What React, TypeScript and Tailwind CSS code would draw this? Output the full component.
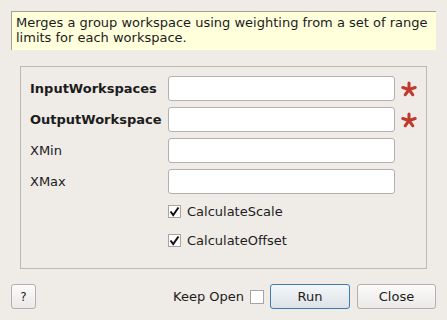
import React from "react";

const FONT = { fontFamily: '"DejaVu Sans", "Liberation Sans", sans-serif' };

function Asterisk() {
  const arms = [-90, -18, 54, 126, 198];
  return (
    <svg width="16" height="16" viewBox="0 0 16 16" className="block">
      {arms.map((a) => {
        const r = (a * Math.PI) / 180;
        return (
          <line
            key={a}
            x1="8"
            y1="8.5"
            x2={8 + Math.cos(r) * 6.5}
            y2={8.5 + Math.sin(r) * 6.5}
            stroke="#c0392b"
            strokeWidth="3"
            strokeLinecap="round"
          />
        );
      })}
    </svg>
  );
}

function Check({ checked }: { checked: boolean }) {
  return (
    <div className="w-[13px] h-[13px] border border-[#a8a4a0] bg-white flex items-center justify-center">
      {checked && (
        <svg width="11" height="11" viewBox="0 0 11 11">
          <path d="M1.5 5.5 L4.2 9 L9.5 1.5" fill="none" stroke="#111" strokeWidth="2" />
        </svg>
      )}
    </div>
  );
}

const fields = [
  { name: "InputWorkspaces", bold: true, required: true },
  { name: "OutputWorkspace", bold: true, required: true },
  { name: "XMin", bold: false, required: false },
  { name: "XMax", bold: false, required: false },
];

export default function App() {
  return (
    <div
      className="w-[447px] h-[320px] bg-[#efebe7] text-[13px] text-[#1c1c1c] p-[11px] flex flex-col overflow-hidden"
      style={FONT}
    >
      {/* description */}
      <div className="h-[39px] bg-[#ffffdc] border-t border-l border-[#a29e9a] pl-[4px] pt-[3px] leading-[15px]">
        Merges a group workspace using weighting from a set of range limits for each workspace.
      </div>

      {/* properties group */}
      <div className="mt-[16px] mx-[9px] h-[203px] border border-[#bcb8b4] pt-[9px] pl-[9px] pr-[9px] flex flex-col gap-[6px]">
        {fields.map((f) => (
          <div key={f.name} className="flex items-center h-[25px]">
            <div className={`w-[138px] ${f.bold ? "font-bold" : ""}`}>{f.name}</div>
            <div className="w-[227px] h-[25px] bg-white border border-[#b4b0ac] rounded-[3px]" />
            <div className="ml-[6px] w-[16px]">{f.required && <Asterisk />}</div>
          </div>
        ))}
        {["CalculateScale", "CalculateOffset"].map((c) => (
          <div key={c} className="flex items-center h-[23px]">
            <div className="w-[138px]" />
            <Check checked />
            <span className="ml-[6px]">{c}</span>
          </div>
        ))}
      </div>

      {/* buttons */}
      <div className="mt-[15px] flex items-center h-[25px]">
        <button className="w-[25px] h-[25px] border border-[#b4b0ac] rounded-[3px] bg-gradient-to-b from-[#fbfbfa] to-[#ebe9e7] text-[12px]">
          ?
        </button>
        <div className="flex-1 flex items-center justify-end">
          <span>Keep Open</span>
          <div className="ml-[6px] w-[14px] h-[14px] border border-[#a8a4a0] bg-white" />
          <button className="ml-[6px] w-[80px] h-[25px] border border-[#3d7db3] rounded-[3px] bg-gradient-to-b from-[#f5f7f9] to-[#dce2e7]">
            Run
          </button>
          <button className="ml-[7px] w-[79px] h-[25px] border border-[#b4b0ac] rounded-[3px] bg-gradient-to-b from-[#fbfbfa] to-[#ebe9e7]">
            Close
          </button>
        </div>
      </div>
    </div>
  );
}
